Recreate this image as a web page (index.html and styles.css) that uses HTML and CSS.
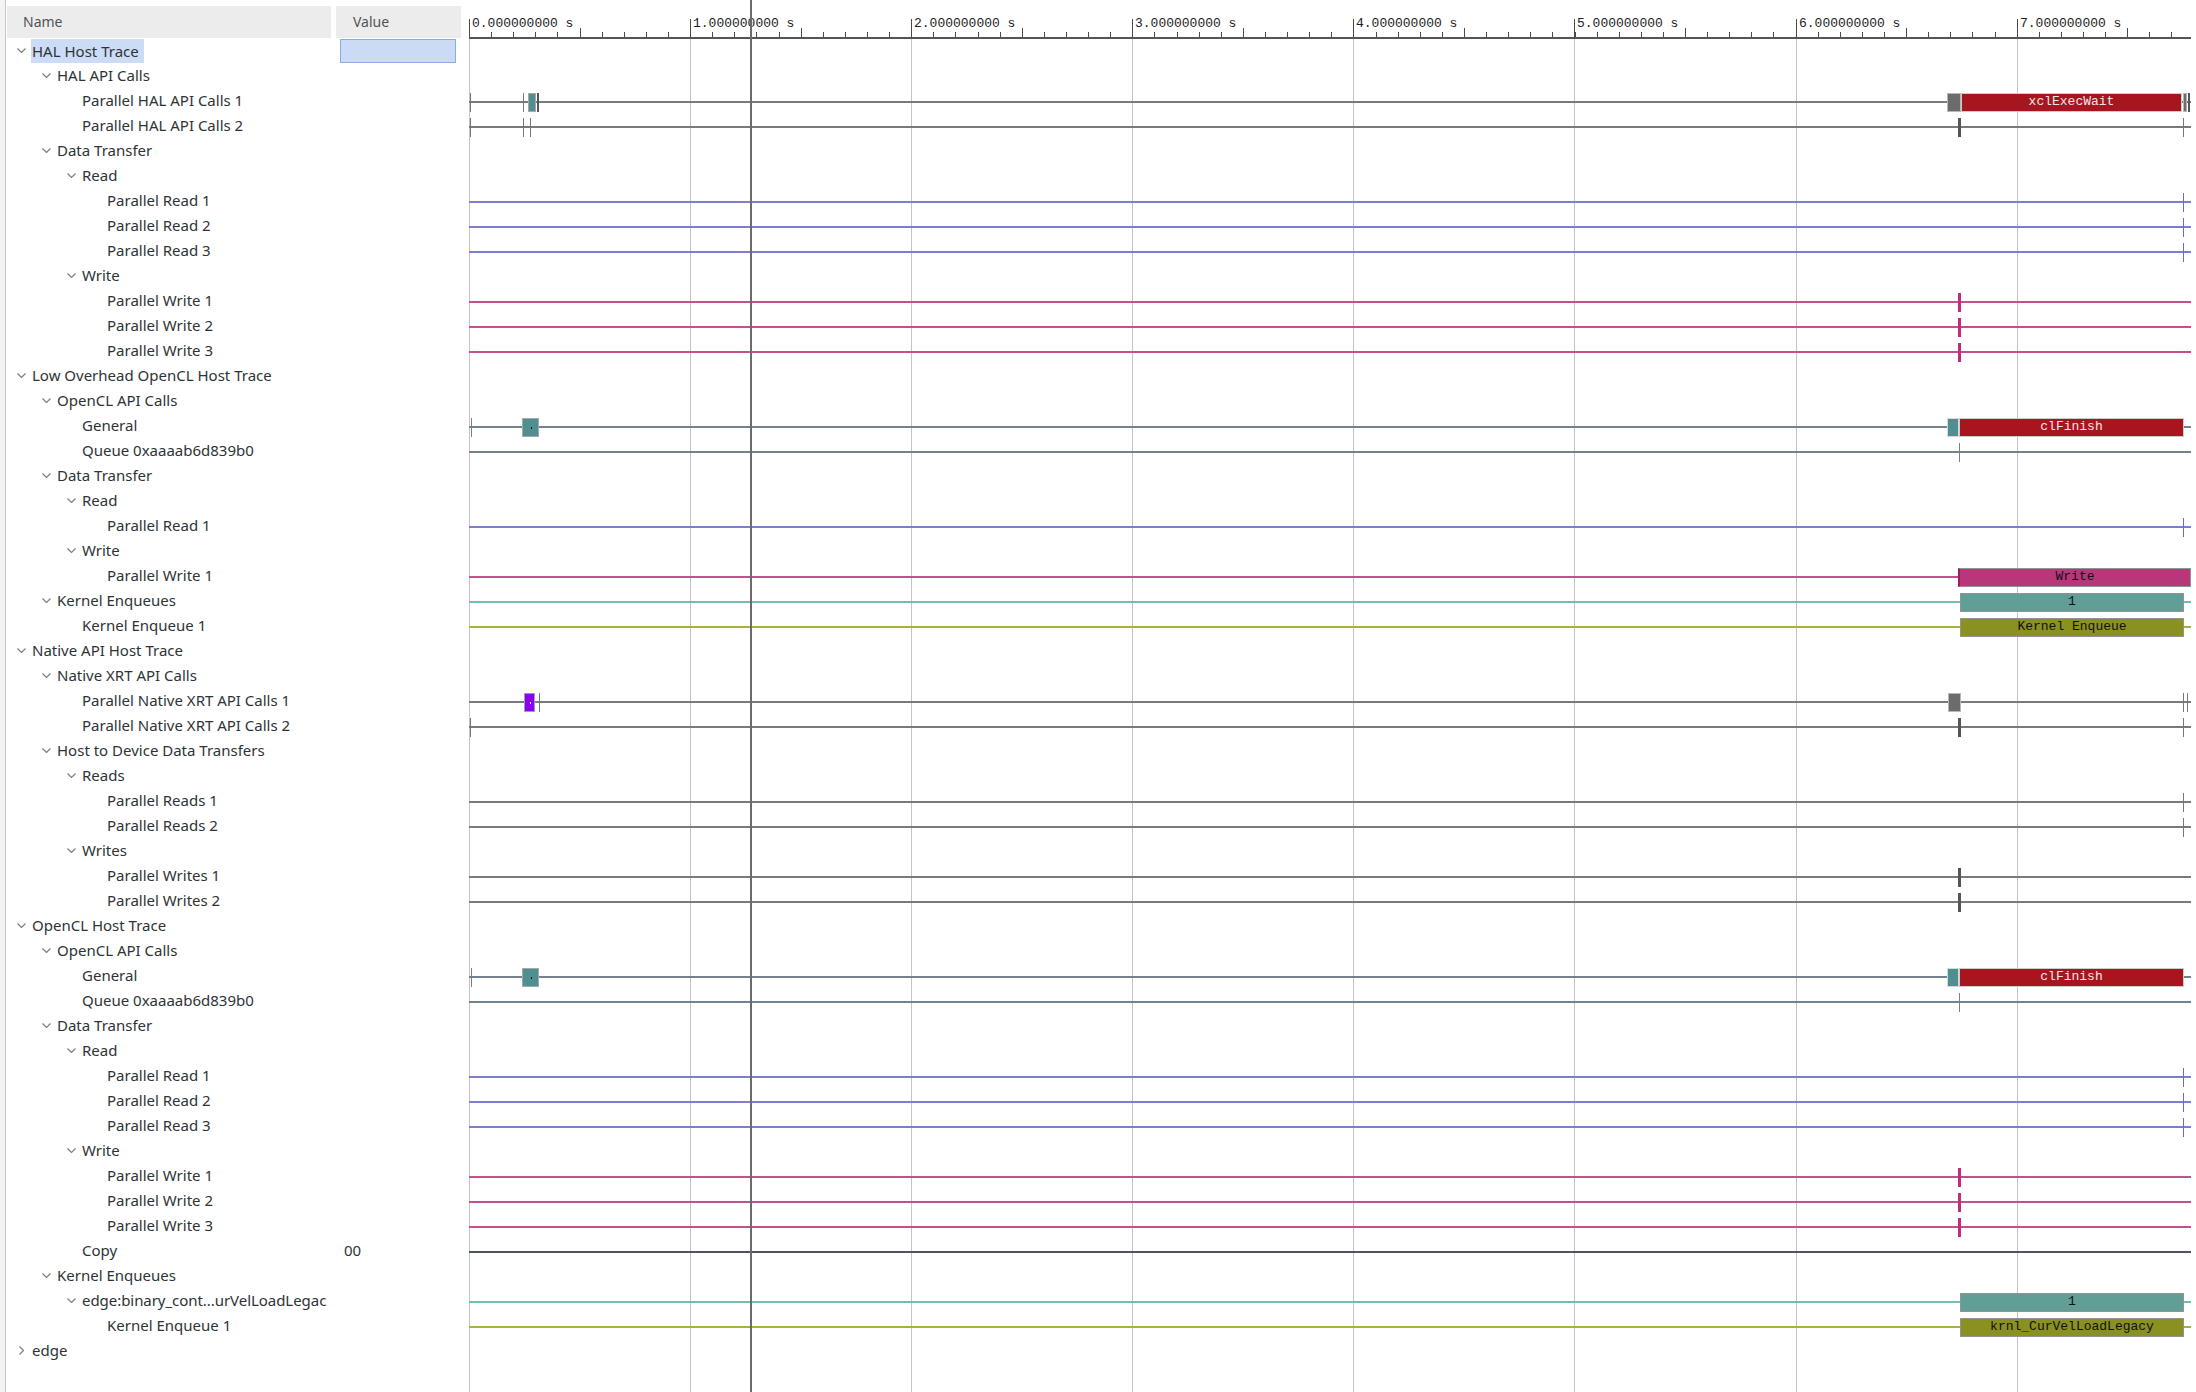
FILE: index.html
```html
<!DOCTYPE html>
<html>
<head>
<meta charset="utf-8">
<title>Trace Viewer</title>
<link rel="stylesheet" href="styles.css">
</head>
<body>
<div class="app">
  <div class="strip"></div>

  <div class="tree">
    <div class="tree-head">
      <div class="th name">Name</div>
      <div class="th value">Value</div>
    </div>
    <div class="tree-body">
      <div class="row l0"><div class="nm"><i class="cv"><svg width="9" height="5" viewBox="0 0 9 5"><path d="M0.5 0.5L4.5 4.5L8.5 0.5"/></svg></i><span class="sel">HAL Host Trace</span></div><div class="vl"><div class="vsel"></div></div></div>
      <div class="row l1"><div class="nm"><i class="cv"><svg width="9" height="5" viewBox="0 0 9 5"><path d="M0.5 0.5L4.5 4.5L8.5 0.5"/></svg></i><span>HAL API Calls</span></div><div class="vl"></div></div>
      <div class="row l2"><div class="nm"><i class="cv"></i><span>Parallel HAL API Calls 1</span></div><div class="vl"></div></div>
      <div class="row l2"><div class="nm"><i class="cv"></i><span>Parallel HAL API Calls 2</span></div><div class="vl"></div></div>
      <div class="row l1"><div class="nm"><i class="cv"><svg width="9" height="5" viewBox="0 0 9 5"><path d="M0.5 0.5L4.5 4.5L8.5 0.5"/></svg></i><span>Data Transfer</span></div><div class="vl"></div></div>
      <div class="row l2"><div class="nm"><i class="cv"><svg width="9" height="5" viewBox="0 0 9 5"><path d="M0.5 0.5L4.5 4.5L8.5 0.5"/></svg></i><span>Read</span></div><div class="vl"></div></div>
      <div class="row l3"><div class="nm"><i class="cv"></i><span>Parallel Read 1</span></div><div class="vl"></div></div>
      <div class="row l3"><div class="nm"><i class="cv"></i><span>Parallel Read 2</span></div><div class="vl"></div></div>
      <div class="row l3"><div class="nm"><i class="cv"></i><span>Parallel Read 3</span></div><div class="vl"></div></div>
      <div class="row l2"><div class="nm"><i class="cv"><svg width="9" height="5" viewBox="0 0 9 5"><path d="M0.5 0.5L4.5 4.5L8.5 0.5"/></svg></i><span>Write</span></div><div class="vl"></div></div>
      <div class="row l3"><div class="nm"><i class="cv"></i><span>Parallel Write 1</span></div><div class="vl"></div></div>
      <div class="row l3"><div class="nm"><i class="cv"></i><span>Parallel Write 2</span></div><div class="vl"></div></div>
      <div class="row l3"><div class="nm"><i class="cv"></i><span>Parallel Write 3</span></div><div class="vl"></div></div>
      <div class="row l0"><div class="nm"><i class="cv"><svg width="9" height="5" viewBox="0 0 9 5"><path d="M0.5 0.5L4.5 4.5L8.5 0.5"/></svg></i><span>Low Overhead OpenCL Host Trace</span></div><div class="vl"></div></div>
      <div class="row l1"><div class="nm"><i class="cv"><svg width="9" height="5" viewBox="0 0 9 5"><path d="M0.5 0.5L4.5 4.5L8.5 0.5"/></svg></i><span>OpenCL API Calls</span></div><div class="vl"></div></div>
      <div class="row l2"><div class="nm"><i class="cv"></i><span>General</span></div><div class="vl"></div></div>
      <div class="row l2"><div class="nm"><i class="cv"></i><span>Queue 0xaaaab6d839b0</span></div><div class="vl"></div></div>
      <div class="row l1"><div class="nm"><i class="cv"><svg width="9" height="5" viewBox="0 0 9 5"><path d="M0.5 0.5L4.5 4.5L8.5 0.5"/></svg></i><span>Data Transfer</span></div><div class="vl"></div></div>
      <div class="row l2"><div class="nm"><i class="cv"><svg width="9" height="5" viewBox="0 0 9 5"><path d="M0.5 0.5L4.5 4.5L8.5 0.5"/></svg></i><span>Read</span></div><div class="vl"></div></div>
      <div class="row l3"><div class="nm"><i class="cv"></i><span>Parallel Read 1</span></div><div class="vl"></div></div>
      <div class="row l2"><div class="nm"><i class="cv"><svg width="9" height="5" viewBox="0 0 9 5"><path d="M0.5 0.5L4.5 4.5L8.5 0.5"/></svg></i><span>Write</span></div><div class="vl"></div></div>
      <div class="row l3"><div class="nm"><i class="cv"></i><span>Parallel Write 1</span></div><div class="vl"></div></div>
      <div class="row l1"><div class="nm"><i class="cv"><svg width="9" height="5" viewBox="0 0 9 5"><path d="M0.5 0.5L4.5 4.5L8.5 0.5"/></svg></i><span>Kernel Enqueues</span></div><div class="vl"></div></div>
      <div class="row l2"><div class="nm"><i class="cv"></i><span>Kernel Enqueue 1</span></div><div class="vl"></div></div>
      <div class="row l0"><div class="nm"><i class="cv"><svg width="9" height="5" viewBox="0 0 9 5"><path d="M0.5 0.5L4.5 4.5L8.5 0.5"/></svg></i><span>Native API Host Trace</span></div><div class="vl"></div></div>
      <div class="row l1"><div class="nm"><i class="cv"><svg width="9" height="5" viewBox="0 0 9 5"><path d="M0.5 0.5L4.5 4.5L8.5 0.5"/></svg></i><span>Native XRT API Calls</span></div><div class="vl"></div></div>
      <div class="row l2"><div class="nm"><i class="cv"></i><span>Parallel Native XRT API Calls 1</span></div><div class="vl"></div></div>
      <div class="row l2"><div class="nm"><i class="cv"></i><span>Parallel Native XRT API Calls 2</span></div><div class="vl"></div></div>
      <div class="row l1"><div class="nm"><i class="cv"><svg width="9" height="5" viewBox="0 0 9 5"><path d="M0.5 0.5L4.5 4.5L8.5 0.5"/></svg></i><span>Host to Device Data Transfers</span></div><div class="vl"></div></div>
      <div class="row l2"><div class="nm"><i class="cv"><svg width="9" height="5" viewBox="0 0 9 5"><path d="M0.5 0.5L4.5 4.5L8.5 0.5"/></svg></i><span>Reads</span></div><div class="vl"></div></div>
      <div class="row l3"><div class="nm"><i class="cv"></i><span>Parallel Reads 1</span></div><div class="vl"></div></div>
      <div class="row l3"><div class="nm"><i class="cv"></i><span>Parallel Reads 2</span></div><div class="vl"></div></div>
      <div class="row l2"><div class="nm"><i class="cv"><svg width="9" height="5" viewBox="0 0 9 5"><path d="M0.5 0.5L4.5 4.5L8.5 0.5"/></svg></i><span>Writes</span></div><div class="vl"></div></div>
      <div class="row l3"><div class="nm"><i class="cv"></i><span>Parallel Writes 1</span></div><div class="vl"></div></div>
      <div class="row l3"><div class="nm"><i class="cv"></i><span>Parallel Writes 2</span></div><div class="vl"></div></div>
      <div class="row l0"><div class="nm"><i class="cv"><svg width="9" height="5" viewBox="0 0 9 5"><path d="M0.5 0.5L4.5 4.5L8.5 0.5"/></svg></i><span>OpenCL Host Trace</span></div><div class="vl"></div></div>
      <div class="row l1"><div class="nm"><i class="cv"><svg width="9" height="5" viewBox="0 0 9 5"><path d="M0.5 0.5L4.5 4.5L8.5 0.5"/></svg></i><span>OpenCL API Calls</span></div><div class="vl"></div></div>
      <div class="row l2"><div class="nm"><i class="cv"></i><span>General</span></div><div class="vl"></div></div>
      <div class="row l2"><div class="nm"><i class="cv"></i><span>Queue 0xaaaab6d839b0</span></div><div class="vl"></div></div>
      <div class="row l1"><div class="nm"><i class="cv"><svg width="9" height="5" viewBox="0 0 9 5"><path d="M0.5 0.5L4.5 4.5L8.5 0.5"/></svg></i><span>Data Transfer</span></div><div class="vl"></div></div>
      <div class="row l2"><div class="nm"><i class="cv"><svg width="9" height="5" viewBox="0 0 9 5"><path d="M0.5 0.5L4.5 4.5L8.5 0.5"/></svg></i><span>Read</span></div><div class="vl"></div></div>
      <div class="row l3"><div class="nm"><i class="cv"></i><span>Parallel Read 1</span></div><div class="vl"></div></div>
      <div class="row l3"><div class="nm"><i class="cv"></i><span>Parallel Read 2</span></div><div class="vl"></div></div>
      <div class="row l3"><div class="nm"><i class="cv"></i><span>Parallel Read 3</span></div><div class="vl"></div></div>
      <div class="row l2"><div class="nm"><i class="cv"><svg width="9" height="5" viewBox="0 0 9 5"><path d="M0.5 0.5L4.5 4.5L8.5 0.5"/></svg></i><span>Write</span></div><div class="vl"></div></div>
      <div class="row l3"><div class="nm"><i class="cv"></i><span>Parallel Write 1</span></div><div class="vl"></div></div>
      <div class="row l3"><div class="nm"><i class="cv"></i><span>Parallel Write 2</span></div><div class="vl"></div></div>
      <div class="row l3"><div class="nm"><i class="cv"></i><span>Parallel Write 3</span></div><div class="vl"></div></div>
      <div class="row l2"><div class="nm"><i class="cv"></i><span>Copy</span></div><div class="vl"><span class="vtext">00</span></div></div>
      <div class="row l1"><div class="nm"><i class="cv"><svg width="9" height="5" viewBox="0 0 9 5"><path d="M0.5 0.5L4.5 4.5L8.5 0.5"/></svg></i><span>Kernel Enqueues</span></div><div class="vl"></div></div>
      <div class="row l2"><div class="nm"><i class="cv"><svg width="9" height="5" viewBox="0 0 9 5"><path d="M0.5 0.5L4.5 4.5L8.5 0.5"/></svg></i><span class="long">edge:binary_cont...urVelLoadLegac</span></div><div class="vl"></div></div>
      <div class="row l3"><div class="nm"><i class="cv"></i><span>Kernel Enqueue 1</span></div><div class="vl"></div></div>
      <div class="row l0"><div class="nm"><i class="cv"><svg width="9" height="9" viewBox="0 0 9 9"><path d="M2.5 0.5L6.5 4.5L2.5 8.5"/></svg></i><span>edge</span></div><div class="vl"></div></div>
    </div>
  </div>

  <div class="timeline">
    <div class="axis">
      <div class="ticks"></div>
      <span class="alabel" style="left:3px">0.000000000 s</span>
      <span class="alabel" style="left:224px">1.000000000 s</span>
      <span class="alabel" style="left:445px">2.000000000 s</span>
      <span class="alabel" style="left:666px">3.000000000 s</span>
      <span class="alabel" style="left:887px">4.000000000 s</span>
      <span class="alabel" style="left:1108px">5.000000000 s</span>
      <span class="alabel" style="left:1330px">6.000000000 s</span>
      <span class="alabel" style="left:1551px">7.000000000 s</span>
    </div>

    <div class="grid">
      <span class="gl" style="left:0px"></span>
      <span class="gl" style="left:221px"></span>
      <span class="gl" style="left:442px"></span>
      <span class="gl" style="left:663px"></span>
      <span class="gl" style="left:884px"></span>
      <span class="gl" style="left:1105px"></span>
      <span class="gl" style="left:1327px"></span>
      <span class="gl" style="left:1548px"></span>
    </div>

    <div class="tracks">
      <div class="track"></div>
      <div class="track"></div>
      <div class="track ln-gray">
        <span class="mk tk" style="left:1px"></span>
        <span class="mk tk" style="left:54px"></span>
        <span class="mk box teal" style="left:59px;width:8px"></span>
        <span class="mk tk dk" style="left:68px;width:2px"></span>
        <span class="mk box gray" style="left:1478px;width:14px"></span>
        <span class="mk bar red" style="left:1492px;width:221px">xclExecWait</span>
        <span class="mk box gray" style="left:1714px;width:4px"></span>
        <span class="mk tk dk" style="left:1719px;width:2px"></span>
      </div>
      <div class="track ln-gray">
        <span class="mk tk" style="left:1px"></span>
        <span class="mk tk" style="left:54px"></span>
        <span class="mk tk" style="left:61px"></span>
        <span class="mk tk dk" style="left:1489px;width:3px"></span>
        <span class="mk tk" style="left:1714px"></span>
      </div>
      <div class="track"></div>
      <div class="track"></div>
      <div class="track ln-blue"><span class="mk tk bl" style="left:1714px"></span></div>
      <div class="track ln-blue"><span class="mk tk bl" style="left:1714px"></span></div>
      <div class="track ln-blue"><span class="mk tk bl" style="left:1714px"></span></div>
      <div class="track"></div>
      <div class="track ln-pink"><span class="mk tk pk" style="left:1489px;width:3px"></span></div>
      <div class="track ln-pink"><span class="mk tk pk" style="left:1489px;width:3px"></span></div>
      <div class="track ln-pink"><span class="mk tk pk" style="left:1489px;width:3px"></span></div>
      <div class="track"></div>
      <div class="track"></div>
      <div class="track ln-slate">
        <span class="mk tk sl" style="left:2px"></span>
        <span class="mk box teal dot" style="left:53px;width:17px"></span>
        <span class="mk box teal light" style="left:1478px;width:12px"></span>
        <span class="mk bar red" style="left:1490px;width:225px">clFinish</span>
      </div>
      <div class="track ln-slate"><span class="mk tk sl" style="left:1490px"></span></div>
      <div class="track"></div>
      <div class="track"></div>
      <div class="track ln-blue"><span class="mk tk bl" style="left:1714px"></span></div>
      <div class="track"></div>
      <div class="track ln-pink"><span class="mk bar pink" style="left:1489px;width:233px">Write</span></div>
      <div class="track ln-teal"><span class="mk bar tealbar" style="left:1491px;width:224px">1</span></div>
      <div class="track ln-olive"><span class="mk bar olive" style="left:1491px;width:224px">Kernel Enqueue</span></div>
      <div class="track"></div>
      <div class="track"></div>
      <div class="track ln-gray">
        <span class="mk box purple" style="left:55px;width:11px"></span>
        <span class="mk tk" style="left:70px"></span>
        <span class="mk box gray" style="left:1479px;width:13px"></span>
        <span class="mk tk" style="left:1714px"></span>
        <span class="mk tk" style="left:1718px"></span>
      </div>
      <div class="track ln-gray">
        <span class="mk tk" style="left:1px"></span>
        <span class="mk tk dk" style="left:1489px;width:3px"></span>
        <span class="mk tk" style="left:1714px"></span>
      </div>
      <div class="track"></div>
      <div class="track"></div>
      <div class="track ln-gray"><span class="mk tk" style="left:1714px"></span></div>
      <div class="track ln-gray"><span class="mk tk" style="left:1714px"></span></div>
      <div class="track"></div>
      <div class="track ln-gray"><span class="mk tk dk" style="left:1489px;width:3px"></span></div>
      <div class="track ln-gray"><span class="mk tk dk" style="left:1489px;width:3px"></span></div>
      <div class="track"></div>
      <div class="track"></div>
      <div class="track ln-slate">
        <span class="mk tk sl" style="left:2px"></span>
        <span class="mk box teal dot" style="left:53px;width:17px"></span>
        <span class="mk box teal light" style="left:1478px;width:12px"></span>
        <span class="mk bar red" style="left:1490px;width:225px">clFinish</span>
      </div>
      <div class="track ln-slate"><span class="mk tk sl" style="left:1490px"></span></div>
      <div class="track"></div>
      <div class="track"></div>
      <div class="track ln-blue"><span class="mk tk bl" style="left:1714px"></span></div>
      <div class="track ln-blue"><span class="mk tk bl" style="left:1714px"></span></div>
      <div class="track ln-blue"><span class="mk tk bl" style="left:1714px"></span></div>
      <div class="track"></div>
      <div class="track ln-pink"><span class="mk tk pk" style="left:1489px;width:3px"></span></div>
      <div class="track ln-pink"><span class="mk tk pk" style="left:1489px;width:3px"></span></div>
      <div class="track ln-pink"><span class="mk tk pk" style="left:1489px;width:3px"></span></div>
      <div class="track ln-dark"></div>
      <div class="track"></div>
      <div class="track ln-teal"><span class="mk bar tealbar" style="left:1491px;width:224px">1</span></div>
      <div class="track ln-olive"><span class="mk bar olive" style="left:1491px;width:224px">krnl_CurVelLoadLegacy</span></div>
      <div class="track"></div>
    </div>

    <div class="cursor"></div>
  </div>
</div>
</body>
</html>
```

FILE: styles.css
```css
html, body {
  margin: 0;
  padding: 0;
  background: #ffffff;
}

body {
  width: 2196px;
  height: 1392px;
  overflow: hidden;
  font-family: "Noto Sans", "Open Sans", sans-serif;
  color: #2e3436;
}

.app {
  display: flex;
  height: 1392px;
}

/* left window edge */
.strip {
  flex: none;
  width: 5px;
  background: #f3f3f3;
  border-right: 1px solid #c6c6c6;
}

/* ---------- tree ---------- */
.tree {
  flex: none;
  width: 463px;
  padding-top: 6px;
}

.tree-head {
  display: flex;
  gap: 5px;
  height: 32px;
  margin-left: 1px;
}

.th {
  background: #ececec;
  font-size: 14px;
  line-height: 32px;
  color: #505356;
  box-sizing: border-box;
}

.th.name {
  width: 324px;
  padding-left: 16px;
}

.th.value {
  width: 125px;
  padding-left: 17px;
}

.tree-body {
  margin-top: 0;
}

.row {
  display: flex;
  gap: 5px;
  height: 25px;
  margin-left: 1px;
  font-size: 15px;
  line-height: 25px;
}

.nm {
  width: 324px;
  flex: none;
  display: flex;
  align-items: center;
  overflow: hidden;
  white-space: nowrap;
  box-sizing: border-box;
}

.l0 .nm { padding-left: 10px; }
.l1 .nm { padding-left: 35px; }
.l2 .nm { padding-left: 60px; }
.l3 .nm { padding-left: 85px; }

.long {
  letter-spacing: -0.05px;
}

.cv {
  flex: none;
  width: 15px;
  height: 25px;
  display: flex;
  align-items: center;
}

.cv svg {
  display: block;
}

.cv path {
  fill: none;
  stroke: #7b7e80;
  stroke-width: 1.15;
}

.sel {
  align-self: flex-end;
  line-height: 24px;
  background: #ccdbf6;
  margin-left: -1px;
  padding-left: 1px;
  padding-right: 5px;
}

.vl {
  width: 125px;
  flex: none;
}

.vsel {
  margin-top: 1px;
  margin-left: 4px;
  width: 116px;
  height: 24px;
  box-sizing: border-box;
  background: #cbdaf5;
  border: 1px solid #8aaee2;
}

.vtext {
  padding-left: 8px;
}

/* ---------- timeline ---------- */
.timeline {
  position: relative;
  flex: none;
  width: 1722px;
}

.axis {
  position: relative;
  height: 37px;
  border-bottom: 2px solid #555555;
}

.ticks {
  position: absolute;
  left: 0;
  right: 0;
  bottom: 0;
  height: 18px;
  background:
    repeating-linear-gradient(90deg, #4a4a4a 0 1px, transparent 1px 221.1px) 0 100% / 100% 18px no-repeat,
    repeating-linear-gradient(90deg, transparent 0 110.55px, #4a4a4a 110.55px 111.55px, transparent 111.55px 221.1px) 0 100% / 100% 9px no-repeat,
    repeating-linear-gradient(90deg, #4a4a4a 0 1px, transparent 1px 22.11px) 0 100% / 100% 5px no-repeat;
}

.alabel {
  position: absolute;
  top: 16px;
  font-family: "Liberation Mono", "DejaVu Sans Mono", monospace;
  font-size: 13px;
  line-height: 15px;
  color: #1c1c1c;
  white-space: pre;
}

.grid {
  position: absolute;
  top: 39px;
  bottom: 0;
  left: 0;
  right: 0;
}

.gl {
  position: absolute;
  top: 0;
  bottom: 0;
  width: 1px;
  background: #c4c4c4;
}

.tracks {
  position: relative;
}

.track {
  position: relative;
  height: 25px;
}

.ln-gray  { background: linear-gradient(#7a7a7a, #7a7a7a) 0 12px / 100% 2px no-repeat; }
.ln-blue  { background: linear-gradient(#7e7ed0, #7e7ed0) 0 12px / 100% 2px no-repeat; }
.ln-pink  { background: linear-gradient(#c4508f, #c4508f) 0 12px / 100% 2px no-repeat; }
.ln-slate { background: linear-gradient(#74818f, #74818f) 0 12px / 100% 2px no-repeat; }
.ln-teal  { background: linear-gradient(#72bcb2, #72bcb2) 0 12px / 100% 2px no-repeat; }
.ln-olive { background: linear-gradient(#a8b040, #a8b040) 0 12px / 100% 2px no-repeat; }
.ln-dark  { background: linear-gradient(#4c5562, #4c5562) 0 12px / 100% 2px no-repeat; }

.mk {
  position: absolute;
  top: 4px;
  height: 19px;
  box-sizing: border-box;
}

.tk {
  width: 1px;
  background: #777777;
}

.tk.dk { background: #555555; }
.tk.bl { background: #6a6ac6; }
.tk.pk { background: #c42a7e; }
.tk.sl { background: #74818f; }

.box {
  border: 1px solid #a8a8a8;
}

.box.teal { background: #4f8f90; }
.box.teal.light { border-color: #c9dede; }
.box.gray { background: #6c6c6c; border-color: #b8b8b8; }
.box.purple { background: #8c00f2; border-color: #a0a0a0; }

.box.dot::after,
.box.purple::after {
  content: "";
  position: absolute;
  left: 50%;
  top: 50%;
  width: 1px;
  height: 2px;
  margin-top: -1px;
  background: #111111;
}

.box.purple::after {
  background: #ffffff;
}

.bar {
  border: 1px solid #939393;
  font-family: "Liberation Mono", "DejaVu Sans Mono", monospace;
  font-size: 13px;
  line-height: 16px;
  text-align: center;
  white-space: pre;
  overflow: hidden;
  color: #111111;
}

.bar.red {
  background: #a8151f;
  border-color: #cccccc;
  color: #f0e4e4;
}

.bar.pink {
  background: #b8377b;
  border-left: 2px solid #a01c5e;
}

.bar.tealbar { background: #619e96; }
.bar.olive { background: #8a9120; }

.cursor {
  position: absolute;
  top: 0;
  bottom: 0;
  left: 281px;
  width: 2px;
  background: #6b6b6b;
  z-index: 5;
}
```
